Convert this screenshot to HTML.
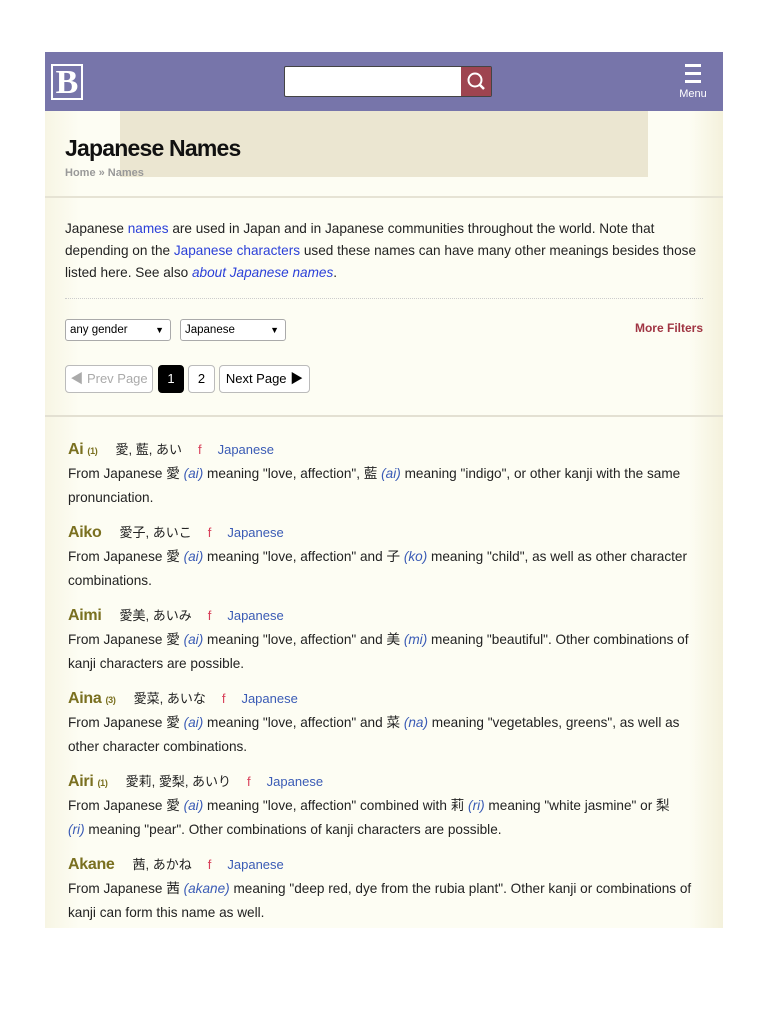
<!DOCTYPE html>
<html><head><meta charset="utf-8"><style>
body{margin:0;background:#fff;font-family:"Liberation Sans","Noto Sans CJK JP",sans-serif;}
.wrap{position:absolute;left:45px;top:52px;width:678px;}
.hdr{height:59px;background:#7775aa;position:relative;}
.logo{position:absolute;left:6px;top:12px;width:32px;height:36px;border:2px solid #fff;color:#fff;font:bold 34px "Liberation Serif",serif;line-height:34px;text-align:center;box-sizing:border-box;}
.search{position:absolute;left:239px;top:14px;width:208px;height:31px;background:#fff;border:1px solid #444;border-radius:2px;box-sizing:border-box;}
.sbtn{position:absolute;right:0;top:0;width:30px;height:29px;background:#9e4450;}
.menu{position:absolute;right:14px;top:12px;color:#fff;font-size:11px;text-align:center;width:32px;}
.menu i{display:block;height:3px;background:#fff;margin:0 8px 5px;}
.main{background:linear-gradient(90deg,#f7f5e4,#fdfdf3 5%,#fdfdf3 95%,#f4f1dc);height:817px;position:relative;}
.titlebox{height:85px;border-bottom:2px solid #e6e3d4;position:relative;}
.titlebg{position:absolute;left:75px;top:0;width:528px;height:66px;background:#ebe6d1;}
h1{position:absolute;left:20px;top:24px;margin:0;font-size:23px;font-weight:bold;color:#111;letter-spacing:-0.8px;}
.bc{position:absolute;left:20px;top:56px;font-size:11px;color:#999;font-weight:bold;}
p{margin:0}
.intro{position:absolute;left:20px;width:640px;font-size:13.6px;line-height:22px;color:#222;}
a{color:#2a3fd8;text-decoration:none}
.dots{position:absolute;left:20px;width:638px;border-top:1px dotted #ccc;}
.sel{position:absolute;height:22px;border:1px solid #aaa;border-radius:3px;background:#fff;font-size:11.5px;line-height:20px;padding-left:4px;box-sizing:border-box;}
.sel:after{content:"▼";position:absolute;right:6px;font-size:9px;}
.mf{position:absolute;right:20px;color:#a03543;font-size:12px;font-weight:bold;}
.pg{position:absolute;height:28px;border:1px solid #bbb;border-radius:4px;background:#fff;font-size:13px;line-height:26px;text-align:center;box-sizing:border-box;}
.sep{position:absolute;left:0;width:678px;border-top:2px solid #e3e0d2;}
.list{position:absolute;left:23px;width:632px;}
.e{height:83px;}
.n{font-size:16px;color:#7a7020;font-weight:bold;letter-spacing:-0.3px;}
.n small{font-size:9px;color:#7a7020;margin-left:4px;}
.k{margin-left:18px;font-size:13px;color:#222;}
.f{margin-left:16px;color:#d8405a;font-size:13px;}
.o{margin-left:16px;color:#3a5bb5;font-size:13px;}
.d{font-size:13.6px;line-height:24px;color:#222;margin-top:3px;}
.d i{color:#3a5bb5}
</style></head><body>
<div class="wrap">
<div class="hdr"><div class="logo">B</div>
<div class="search"><div class="sbtn"><svg width="30" height="29" viewBox="0 0 30 29"><circle cx="14" cy="13" r="6.5" fill="none" stroke="#fff" stroke-width="2"/><path d="M18.5 17.5L23 22" stroke="#fff" stroke-width="2.5"/></svg></div></div>
<div class="menu"><i></i><i></i><i></i>Menu</div></div>
<div class="main">
<div class="titlebox"><div class="titlebg"></div><h1>Japanese Names</h1><div class="bc">Home » Names</div></div>
<p class="intro" style="top:107px">Japanese <a>names</a> are used in Japan and in Japanese communities throughout the world. Note that depending on the <a>Japanese characters</a> used these names can have many other meanings besides those listed here. See also <a><i>about Japanese names</i></a>.</p>
<div class="dots" style="top:187px"></div>
<div class="sel" style="left:20px;top:208px;width:106px">any gender</div>
<div class="sel" style="left:135px;top:208px;width:106px">Japanese</div>
<div class="mf" style="top:210px">More Filters</div>
<div class="pg" style="left:20px;top:254px;width:88px;color:#aaa">◀ Prev Page</div>
<div class="pg" style="left:113px;top:254px;width:26px;background:#000;color:#fff;border-color:#000">1</div>
<div class="pg" style="left:143px;top:254px;width:27px">2</div>
<div class="pg" style="left:174px;top:254px;width:91px">Next Page ▶</div>
<div class="sep" style="top:304px"></div>
<div class="list" style="top:328px">
<div class="e"><span class="n">Ai<small>(1)</small></span><span class="k">愛, 藍, あい</span><span class="f">f</span><span class="o">Japanese</span>
<p class="d">From Japanese 愛 <i>(ai)</i> meaning "love, affection", 藍 <i>(ai)</i> meaning "indigo", or other kanji with the same pronunciation.</p></div>
<div class="e"><span class="n">Aiko</span><span class="k">愛子, あいこ</span><span class="f">f</span><span class="o">Japanese</span>
<p class="d">From Japanese 愛 <i>(ai)</i> meaning "love, affection" and 子 <i>(ko)</i> meaning "child", as well as other character combinations.</p></div>
<div class="e"><span class="n">Aimi</span><span class="k">愛美, あいみ</span><span class="f">f</span><span class="o">Japanese</span>
<p class="d">From Japanese 愛 <i>(ai)</i> meaning "love, affection" and 美 <i>(mi)</i> meaning "beautiful". Other combinations of kanji characters are possible.</p></div>
<div class="e"><span class="n">Aina<small>(3)</small></span><span class="k">愛菜, あいな</span><span class="f">f</span><span class="o">Japanese</span>
<p class="d">From Japanese 愛 <i>(ai)</i> meaning "love, affection" and 菜 <i>(na)</i> meaning "vegetables, greens", as well as other character combinations.</p></div>
<div class="e"><span class="n">Airi<small>(1)</small></span><span class="k">愛莉, 愛梨, あいり</span><span class="f">f</span><span class="o">Japanese</span>
<p class="d">From Japanese 愛 <i>(ai)</i> meaning "love, affection" combined with 莉 <i>(ri)</i> meaning "white jasmine" or 梨<br><i>(ri)</i> meaning "pear". Other combinations of kanji characters are possible.</p></div>
<div class="e"><span class="n">Akane</span><span class="k">茜, あかね</span><span class="f">f</span><span class="o">Japanese</span>
<p class="d">From Japanese 茜 <i>(akane)</i> meaning "deep red, dye from the rubia plant". Other kanji or combinations of kanji can form this name as well.</p></div>
</div>
</div></div>
</body></html>
